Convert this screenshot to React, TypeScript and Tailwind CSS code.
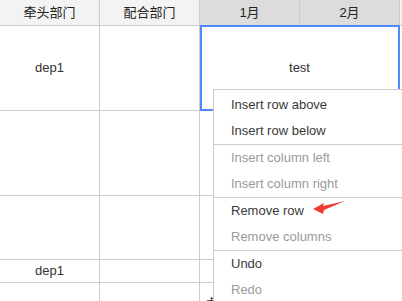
import React from "react";

const font = { fontFamily: '"Liberation Sans", Arial, "Noto Sans CJK SC", sans-serif' };

function Row({ h, cells, header }: { h: string; cells: React.ReactNode[]; header?: boolean }) {
  return (
    <div className={`flex ${h} border-b border-[#cccccc]`}>
      {cells.map((c, i) => (
        <div
          key={i}
          className={`w-[100px] shrink-0 border-r border-[#cccccc] flex items-center justify-center ${
            header ? (i < 2 ? "bg-[#f3f3f3] text-[#222]" : "bg-[#dcdcdc] text-[#222]") : "bg-white text-[#333]"
          }`}
        >
          {c}
        </div>
      ))}
      <div className={`flex-1 ${header ? "bg-[#f3f3f3]" : "bg-white"}`} />
    </div>
  );
}

const items: { label: string; disabled?: boolean; sep?: boolean }[] = [
  { label: "Insert row above" },
  { label: "Insert row below", sep: true },
  { label: "Insert column left", disabled: true },
  { label: "Insert column right", disabled: true, sep: true },
  { label: "Remove row" },
  { label: "Remove columns", disabled: true, sep: true },
  { label: "Undo" },
  { label: "Redo", disabled: true },
];

export default function App() {
  return (
    <div className="relative w-[402px] h-[301px] overflow-hidden bg-white text-[13px]" style={font}>
      <Row h="h-[26px]" header cells={["牵头部门", "配合部门", "1月", "2月"]} />
      <div className="flex h-[85px] border-b border-[#cccccc]">
        <div className="w-[100px] shrink-0 border-r border-[#cccccc] flex items-center justify-center text-[#333]">dep1</div>
        <div className="w-[100px] shrink-0 border-r border-[#cccccc]" />
        <div className="w-[200px] shrink-0 border-r border-[#cccccc] flex items-center justify-center text-[#333]">test</div>
        <div className="flex-1" />
      </div>
      <Row h="h-[85px]" cells={["", "", "", ""]} />
      <Row h="h-[64px]" cells={["", "", "", ""]} />
      <Row h="h-[23px]" cells={["dep1", "", "", ""]} />
      <div className="flex h-[40px]">
        <div className="w-[100px] shrink-0 border-r border-[#cccccc]" />
        <div className="w-[100px] shrink-0 border-r border-[#cccccc]" />
        <div className="w-[100px] shrink-0 border-r border-[#cccccc] pl-[5px] pt-[11px] text-[#333]">卓</div>
        <div className="w-[100px] shrink-0 border-r border-[#cccccc]" />
      </div>

      {/* selection */}
      <div className="absolute left-[200px] top-[25px] w-[200px] h-[86px] border-2 border-[#4b89ff] pointer-events-none" />

      {/* context menu */}
      <div className="absolute left-[213px] top-[89px] w-[200px] bg-white border-l border-t border-[#cccccc] pt-[2px]">
        {items.map((it) => (
          <div key={it.label}>
            <div className={`h-[26px] flex items-center pl-[17px] whitespace-nowrap ${it.disabled ? "text-[#9a9a9a]" : "text-[#3a3a3a]"}`}>
              {it.label}
            </div>
            {it.sep && <div className="h-px bg-[#cccccc]" />}
          </div>
        ))}
      </div>

      {/* red arrow */}
      <svg className="absolute left-[310px] top-[198px]" width="40" height="20" viewBox="0 0 40 20">
        <polygon points="3,11 14,5 13,8 35,3 14,12 13,16" fill="#ee3b36" />
      </svg>
    </div>
  );
}
